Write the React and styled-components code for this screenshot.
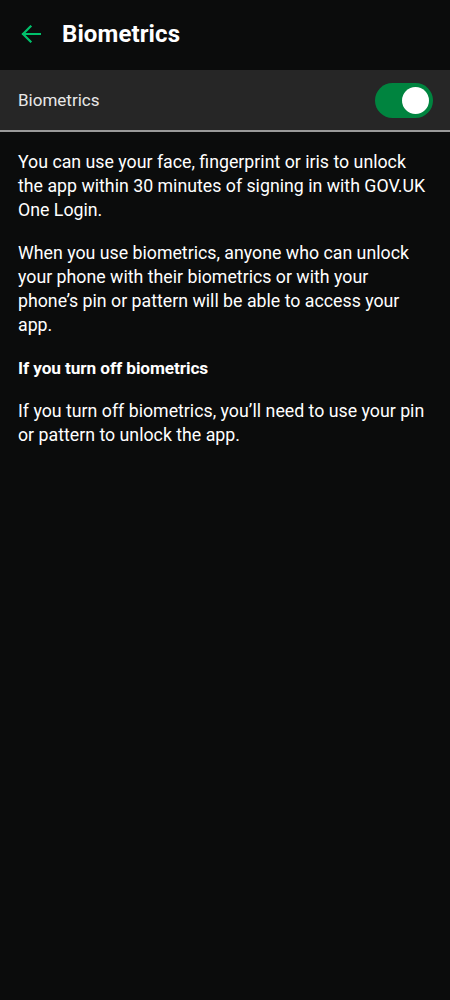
import React, { useState } from "react";
import styled, { createGlobalStyle } from "styled-components";

const Global = createGlobalStyle`
  html, body { margin: 0; padding: 0; background: #0b0c0c; }
  body { font-family: Roboto, "Noto Sans", sans-serif; color: #ffffff; }
  * { box-sizing: border-box; }
`;

const Screen = styled.div`
  width: 450px;
  min-height: 1000px;
  background: #0b0c0c;
  display: flex;
  flex-direction: column;
`;

const TopBar = styled.header`
  height: 70px;
  display: flex;
  align-items: center;
  padding: 0 0 2px 20px;
  gap: 20px;
`;

const BackButton = styled.button`
  width: 22px;
  height: 22px;
  padding: 0;
  border: 0;
  background: none;
  display: flex;
  align-items: center;
  justify-content: center;
  cursor: pointer;
`;

const Title = styled.h1`
  margin: 0;
  font-size: 24px;
  font-weight: 700;
  color: #ffffff;
  letter-spacing: 0.1px;
`;

const SettingRow = styled.div`
  height: 62px;
  background: #262626;
  border-bottom: 2px solid #9a9a9a;
  display: flex;
  align-items: center;
  justify-content: space-between;
  padding: 0 17px 0 18px;
`;

const RowLabel = styled.span`
  font-size: 17px;
  color: #e8e8e8;
`;

const Track = styled.button`
  width: 58px;
  height: 35px;
  border-radius: 18px;
  border: 0;
  padding: 0 4px;
  background: ${(p) => (p.$on ? "#00843f" : "#6f6f6f")};
  display: flex;
  align-items: center;
  justify-content: ${(p) => (p.$on ? "flex-end" : "flex-start")};
  cursor: pointer;
`;

const Knob = styled.span`
  width: 27px;
  height: 27px;
  border-radius: 50%;
  background: #ffffff;
`;

const Content = styled.main`
  padding: 18px 18px 0 18px;
  display: flex;
  flex-direction: column;
  gap: 19px;
`;

const Para = styled.p`
  margin: 0;
  font-size: 17.75px;
  line-height: 24px;
  color: #ffffff;
`;

const Heading = styled.h2`
  margin: 0;
  font-size: 17.25px;
  line-height: 24px;
  font-weight: 700;
  color: #ffffff;
  letter-spacing: -0.1px;
`;

export default function App() {
  const [on, setOn] = useState(true);
  return (
    <Screen>
      <Global />
      <TopBar>
        <BackButton aria-label="Back">
          <svg width="20" height="18" viewBox="0 0 20 18" fill="none">
            <path
              d="M19 9H2M9.5 1.5L2 9l7.5 7.5"
              stroke="#00c06b"
              strokeWidth="2.2"
              strokeLinecap="square"
            />
          </svg>
        </BackButton>
        <Title>Biometrics</Title>
      </TopBar>
      <SettingRow>
        <RowLabel>Biometrics</RowLabel>
        <Track $on={on} onClick={() => setOn(!on)} aria-label="Biometrics">
          <Knob />
        </Track>
      </SettingRow>
      <Content>
        <Para>
          You can use your face, fingerprint or iris to unlock the app within 30
          minutes of signing in with GOV.UK One Login.
        </Para>
        <Para>
          When you use biometrics, anyone who can unlock your phone with their
          biometrics or with your phone’s pin or pattern will be able to access
          your app.
        </Para>
        <Heading>If you turn off biometrics</Heading>
        <Para>
          If you turn off biometrics, you’ll need to use your pin or pattern to
          unlock the app.
        </Para>
      </Content>
    </Screen>
  );
}
